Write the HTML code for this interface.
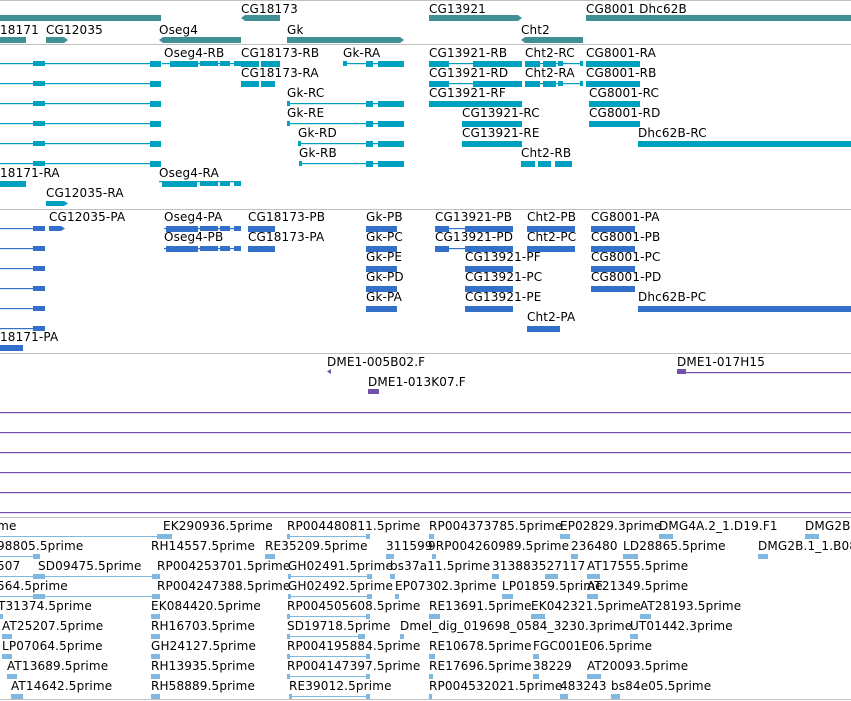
<!DOCTYPE html>
<html><head><meta charset="utf-8"><style>
html,body{margin:0;padding:0;background:#fff;width:851px;height:701px;overflow:hidden}
svg{display:block}
text{font-family:"DejaVu Sans","Liberation Sans",sans-serif;font-size:12px;fill:#000;letter-spacing:0.15px}
</style></head><body>
<svg width="851" height="701" viewBox="0 0 851 701">
<g fill="#c0c0c0">
<rect x="0" y="0" width="851" height="1"/>
<rect x="0" y="44" width="851" height="1"/>
<rect x="0" y="209" width="851" height="1"/>
<rect x="0" y="353" width="851" height="1"/>
<rect x="0" y="517" width="851" height="1"/>
<rect x="0" y="699" width="851" height="1"/>
</g>

<g fill="#3f8f95">
<rect x="0" y="15" width="161" height="6"/>
<polygon points="241,18 245,15 280,15 280,21 245,21"/>
<polygon points="429,15 518,15 522,18 518,21 429,21"/>
<rect x="586" y="15" width="265" height="6"/>
<rect x="0" y="37" width="26" height="6"/>
<polygon points="46,37 64,37 68,40 64,43 46,43"/>
<polygon points="159,40 163,37 241,37 241,43 163,43"/>
<polygon points="287,37 400,37 404,40 400,43 287,43"/>
<polygon points="521,40 525,37 583,37 583,43 525,43"/>
</g>
<text x="241" y="13">CG18173</text>
<text x="429" y="13">CG13921</text>
<text x="586" y="13">CG8001 Dhc62B</text>
<text x="0" y="34">18171</text>
<text x="46" y="34">CG12035</text>
<text x="159" y="34">Oseg4</text>
<text x="287" y="34">Gk</text>
<text x="521" y="34">Cht2</text>

<g fill="#00a0c0">
<rect x="0" y="63" width="161" height="1.2"/><rect x="33" y="61" width="12" height="5"/><rect x="150" y="61" width="11" height="6"/>
<rect x="0" y="83" width="161" height="1.2"/><rect x="33" y="81" width="12" height="5"/><rect x="150" y="81" width="11" height="6"/>
<rect x="0" y="103" width="161" height="1.2"/><rect x="33" y="101" width="12" height="5"/><rect x="150" y="101" width="11" height="6"/>
<rect x="0" y="123" width="161" height="1.2"/><rect x="33" y="121" width="12" height="5"/><rect x="150" y="121" width="11" height="6"/>
<rect x="0" y="143" width="161" height="1.2"/><rect x="33" y="141" width="12" height="5"/><rect x="150" y="141" width="11" height="6"/>
<rect x="0" y="163" width="161" height="1.2"/><rect x="33" y="161" width="12" height="5"/><rect x="150" y="161" width="11" height="6"/>
<rect x="162" y="63" width="79" height="1.2"/><rect x="170" y="61" width="28" height="6"/><rect x="200" y="61" width="18" height="5"/><rect x="220" y="61" width="10" height="5"/><rect x="234" y="61" width="7" height="5"/>
<rect x="241" y="61" width="18" height="6"/><rect x="261" y="61" width="19" height="6"/>
<rect x="241" y="81" width="18" height="6"/><rect x="261" y="81" width="14" height="6"/>
<rect x="343" y="63" width="61" height="1.2"/><rect x="343" y="61" width="4" height="5"/><rect x="366" y="61" width="7" height="6"/><rect x="378" y="61" width="26" height="6"/>
<rect x="287" y="103" width="117" height="1.2"/><rect x="287" y="101" width="3" height="5"/><rect x="366" y="101" width="7" height="6"/><rect x="378" y="101" width="26" height="6"/>
<rect x="287" y="123" width="117" height="1.2"/><rect x="287" y="121" width="3" height="5"/><rect x="366" y="121" width="7" height="6"/><rect x="378" y="121" width="26" height="6"/>
<rect x="298" y="143" width="106" height="1.2"/><rect x="298" y="141" width="3" height="5"/><rect x="366" y="141" width="7" height="6"/><rect x="378" y="141" width="26" height="6"/>
<rect x="299" y="163" width="105" height="1.2"/><rect x="299" y="161" width="3" height="5"/><rect x="366" y="161" width="7" height="6"/><rect x="378" y="161" width="26" height="6"/>
<rect x="429" y="63" width="93" height="1.2"/><rect x="429" y="61" width="20" height="6"/><rect x="473" y="61" width="49" height="6"/>
<rect x="429" y="83" width="93" height="1.2"/><rect x="429" y="81" width="20" height="6"/><rect x="473" y="81" width="49" height="6"/>
<rect x="429" y="101" width="93" height="6"/>
<rect x="462" y="121" width="60" height="6"/>
<rect x="462" y="141" width="60" height="6"/>
<rect x="525" y="63" width="58" height="1.2"/><rect x="525" y="61" width="15" height="6"/><rect x="543" y="61" width="13" height="6"/><rect x="558" y="61" width="5" height="5"/><rect x="580" y="61" width="3" height="5"/>
<rect x="525" y="83" width="58" height="1.2"/><rect x="525" y="81" width="15" height="6"/><rect x="543" y="81" width="13" height="6"/><rect x="558" y="81" width="5" height="5"/><rect x="580" y="81" width="3" height="5"/>
<rect x="521" y="161" width="14" height="6"/><rect x="538" y="161" width="13" height="6"/><rect x="555" y="161" width="17" height="6"/>
<rect x="586" y="61" width="54" height="6"/><rect x="586" y="81" width="54" height="6"/><rect x="589" y="101" width="51" height="6"/><rect x="589" y="121" width="51" height="6"/>
<rect x="638" y="141" width="213" height="6"/>
<rect x="0" y="181" width="26" height="6"/>
<rect x="159" y="181" width="82" height="1.2"/><rect x="162" y="181" width="35" height="6"/><rect x="200" y="181" width="18" height="5"/><rect x="220" y="181" width="10" height="5"/><rect x="234" y="181" width="7" height="5"/>
<polygon points="46,201 64,201 68,203.5 64,206 46,206"/>
</g>
<text x="164" y="57">Oseg4-RB</text><text x="241" y="57">CG18173-RB</text><text x="343" y="57">Gk-RA</text><text x="429" y="57">CG13921-RB</text><text x="525" y="57">Cht2-RC</text><text x="586" y="57">CG8001-RA</text>
<text x="241" y="77">CG18173-RA</text><text x="429" y="77">CG13921-RD</text><text x="525" y="77">Cht2-RA</text><text x="586" y="77">CG8001-RB</text>
<text x="287" y="97">Gk-RC</text><text x="429" y="97">CG13921-RF</text><text x="589" y="97">CG8001-RC</text>
<text x="287" y="117">Gk-RE</text><text x="462" y="117">CG13921-RC</text><text x="589" y="117">CG8001-RD</text>
<text x="298" y="137">Gk-RD</text><text x="462" y="137">CG13921-RE</text><text x="638" y="137">Dhc62B-RC</text>
<text x="299" y="157">Gk-RB</text><text x="521" y="157">Cht2-RB</text>
<text x="0" y="177">18171-RA</text><text x="159" y="177">Oseg4-RA</text>
<text x="46" y="197">CG12035-RA</text>

<g fill="#3370cc">
<rect x="0" y="228" width="45" height="1.2"/><rect x="33" y="226" width="12" height="5"/>
<rect x="0" y="248" width="45" height="1.2"/><rect x="33" y="246" width="12" height="5"/>
<rect x="0" y="268" width="45" height="1.2"/><rect x="33" y="266" width="12" height="5"/>
<rect x="0" y="288" width="45" height="1.2"/><rect x="33" y="286" width="12" height="5"/>
<rect x="0" y="308" width="45" height="1.2"/><rect x="33" y="306" width="12" height="5"/>
<rect x="0" y="328" width="45" height="1.2"/><rect x="33" y="326" width="12" height="5"/>
<polygon points="49,226 61,226 65,228.5 61,231 49,231"/>
<rect x="164" y="228" width="77" height="1.2"/><rect x="166" y="226" width="32" height="6"/><rect x="200" y="226" width="18" height="5"/><rect x="220" y="226" width="10" height="5"/><rect x="234" y="226" width="7" height="5"/>
<rect x="164" y="248" width="77" height="1.2"/><rect x="166" y="246" width="32" height="6"/><rect x="200" y="246" width="18" height="5"/><rect x="220" y="246" width="10" height="5"/><rect x="234" y="246" width="7" height="5"/>
<rect x="248" y="226" width="27" height="6"/><rect x="248" y="246" width="27" height="6"/>
<rect x="366" y="226" width="31" height="6"/><rect x="366" y="246" width="31" height="6"/><rect x="366" y="266" width="31" height="6"/><rect x="366" y="286" width="31" height="6"/><rect x="366" y="306" width="31" height="6"/>
<rect x="435" y="228" width="78" height="1.2"/><rect x="435" y="226" width="14" height="6"/><rect x="465" y="226" width="48" height="6"/>
<rect x="435" y="248" width="78" height="1.2"/><rect x="435" y="246" width="14" height="6"/><rect x="465" y="246" width="48" height="6"/>
<rect x="465" y="266" width="48" height="6"/><rect x="465" y="286" width="48" height="6"/><rect x="465" y="306" width="48" height="6"/>
<rect x="527" y="226" width="48" height="6"/><rect x="527" y="246" width="48" height="6"/><rect x="527" y="326" width="33" height="6"/>
<rect x="591" y="226" width="44" height="6"/><rect x="591" y="246" width="44" height="6"/><rect x="591" y="266" width="44" height="6"/><rect x="591" y="286" width="44" height="6"/>
<rect x="638" y="306" width="213" height="6"/>
<rect x="0" y="345" width="23" height="6"/>
</g>
<text x="49" y="221">CG12035-PA</text><text x="164" y="221">Oseg4-PA</text><text x="248" y="221">CG18173-PB</text><text x="366" y="221">Gk-PB</text><text x="435" y="221">CG13921-PB</text><text x="527" y="221">Cht2-PB</text><text x="591" y="221">CG8001-PA</text>
<text x="164" y="241">Oseg4-PB</text><text x="248" y="241">CG18173-PA</text><text x="366" y="241">Gk-PC</text><text x="435" y="241">CG13921-PD</text><text x="527" y="241">Cht2-PC</text><text x="591" y="241">CG8001-PB</text>
<text x="366" y="261">Gk-PE</text><text x="465" y="261">CG13921-PF</text><text x="591" y="261">CG8001-PC</text>
<text x="366" y="281">Gk-PD</text><text x="465" y="281">CG13921-PC</text><text x="591" y="281">CG8001-PD</text>
<text x="366" y="301">Gk-PA</text><text x="465" y="301">CG13921-PE</text><text x="638" y="301">Dhc62B-PC</text>
<text x="527" y="321">Cht2-PA</text>
<text x="0" y="341">18171-PA</text>

<g fill="#7050a8">
<polygon points="327,371.5 331,369 331,374"/>
<rect x="677" y="369" width="9" height="5"/><rect x="686" y="372" width="165" height="1.2"/>
<rect x="368" y="389" width="11" height="5"/>
<rect x="0" y="412" width="851" height="1.2"/>
<rect x="0" y="432" width="851" height="1.2"/>
<rect x="0" y="452" width="851" height="1.2"/>
<rect x="0" y="472" width="851" height="1.2"/>
<rect x="0" y="492" width="851" height="1.2"/>
<rect x="0" y="512" width="851" height="1.2"/>
</g>
<text x="327" y="366">DME1-005B02.F</text><text x="677" y="366">DME1-017H15</text>
<text x="368" y="386">DME1-013K07.F</text>

<g fill="#80b8e0">
<rect x="0" y="536" width="160" height="1"/><rect x="157" y="534" width="15" height="5"/>
<rect x="287" y="536" width="83" height="1"/><rect x="287" y="534" width="3" height="5"/><rect x="366" y="534" width="4" height="5"/>
<rect x="429" y="534" width="5" height="5"/><rect x="560" y="534" width="10" height="5"/><rect x="659" y="534" width="14" height="5"/><rect x="805" y="534" width="14" height="5"/>
<rect x="0" y="556" width="40" height="1"/><rect x="33" y="554" width="7" height="5"/>
<rect x="265" y="554" width="10" height="5"/><rect x="386" y="554" width="8" height="5"/><rect x="432" y="554" width="4" height="5"/><rect x="571" y="554" width="7" height="5"/><rect x="623" y="554" width="15" height="5"/><rect x="758" y="554" width="10" height="5"/>
<rect x="0" y="576" width="160" height="1"/><rect x="33" y="574" width="12" height="5"/><rect x="152" y="574" width="8" height="5"/>
<rect x="288" y="576" width="84" height="1"/><rect x="288" y="574" width="3" height="5"/><rect x="367" y="574" width="5" height="5"/><rect x="390" y="574" width="5" height="5"/>
<rect x="492" y="574" width="7" height="5"/><rect x="545" y="574" width="13" height="5"/><rect x="587" y="574" width="13" height="5"/>
<rect x="0" y="596" width="160" height="1"/><rect x="33" y="594" width="12" height="5"/><rect x="152" y="594" width="8" height="5"/>
<rect x="288" y="596" width="84" height="1"/><rect x="288" y="594" width="3" height="5"/><rect x="367" y="594" width="5" height="5"/><rect x="395" y="594" width="4" height="5"/>
<rect x="502" y="594" width="11" height="5"/><rect x="587" y="594" width="11" height="5"/>
<rect x="0" y="614" width="3" height="5"/><rect x="151" y="614" width="9" height="5"/><rect x="287" y="616" width="83" height="1"/><rect x="287" y="614" width="3" height="5"/><rect x="366" y="614" width="4" height="5"/>
<rect x="429" y="614" width="11" height="5"/><rect x="531" y="614" width="14" height="5"/><rect x="640" y="614" width="11" height="5"/>
<rect x="2" y="634" width="10" height="5"/><rect x="151" y="634" width="9" height="5"/><rect x="287" y="636" width="78" height="1"/><rect x="287" y="634" width="3" height="5"/><rect x="358" y="634" width="7" height="5"/><rect x="400" y="634" width="4" height="5"/><rect x="630" y="634" width="8" height="5"/>
<rect x="2" y="654" width="10" height="5"/><rect x="151" y="654" width="9" height="5"/><rect x="287" y="656" width="83" height="1"/><rect x="287" y="654" width="3" height="5"/><rect x="366" y="654" width="4" height="5"/><rect x="429" y="654" width="6" height="5"/><rect x="533" y="654" width="6" height="5"/>
<rect x="7" y="674" width="10" height="5"/><rect x="151" y="674" width="9" height="5"/><rect x="287" y="676" width="83" height="1"/><rect x="287" y="674" width="3" height="5"/><rect x="366" y="674" width="4" height="5"/><rect x="429" y="674" width="4" height="5"/><rect x="533" y="674" width="6" height="5"/><rect x="587" y="674" width="14" height="5"/>
<rect x="11" y="694" width="12" height="5"/><rect x="151" y="694" width="9" height="5"/><rect x="289" y="696" width="81" height="1"/><rect x="289" y="694" width="3" height="5"/><rect x="366" y="694" width="4" height="5"/><rect x="429" y="694" width="3" height="5"/><rect x="560" y="694" width="8" height="5"/><rect x="611" y="694" width="9" height="5"/>
</g>
<text x="-27" y="530">5prime</text><text x="163" y="530">EK290936.5prime</text><text x="287" y="530">RP004480811.5prime</text><text x="429" y="530">RP004373785.5prime</text><text x="560" y="530">EP02829.3prime</text><text x="659" y="530">DMG4A.2_1.D19.F1</text><text x="805" y="530">DMG2B.</text>
<text x="-3" y="550">98805.5prime</text><text x="151" y="550">RH14557.5prime</text><text x="265" y="550">RE35209.5prime</text><text x="386" y="550">311599</text><text x="428" y="550">9RP004260989.5prime</text><text x="571" y="550">236480</text><text x="623" y="550">LD28865.5prime</text><text x="758" y="550">DMG2B.1_1.B08</text>
<text x="-3" y="570">507</text><text x="38" y="570">SD09475.5prime</text><text x="157" y="570">RP004253701.5prime</text><text x="288" y="570">GH02491.5prime</text><text x="390" y="570">bs37a11.5prime</text><text x="492" y="570">313883527117</text><text x="587" y="570">AT17555.5prime</text>
<text x="-3" y="590">564.5prime</text><text x="157" y="590">RP004247388.5prime</text><text x="288" y="590">GH02492.5prime</text><text x="395" y="590">EP07302.3prime</text><text x="502" y="590">LP01859.5prime</text><text x="587" y="590">AT21349.5prime</text>
<text x="-2" y="610">T31374.5prime</text><text x="151" y="610">EK084420.5prime</text><text x="287" y="610">RP004505608.5prime</text><text x="429" y="610">RE13691.5prime</text><text x="531" y="610">EK042321.5prime</text><text x="640" y="610">AT28193.5prime</text>
<text x="2" y="630">AT25207.5prime</text><text x="151" y="630">RH16703.5prime</text><text x="287" y="630">SD19718.5prime</text><text x="400" y="630">Dmel_dig_019698_0584_3230.3prime</text><text x="630" y="630">UT01442.3prime</text>
<text x="2" y="650">LP07064.5prime</text><text x="151" y="650">GH24127.5prime</text><text x="287" y="650">RP004195884.5prime</text><text x="429" y="650">RE10678.5prime</text><text x="533" y="650">FGC001E06.5prime</text>
<text x="7" y="670">AT13689.5prime</text><text x="151" y="670">RH13935.5prime</text><text x="287" y="670">RP004147397.5prime</text><text x="429" y="670">RE17696.5prime</text><text x="533" y="670">38229</text><text x="587" y="670">AT20093.5prime</text>
<text x="11" y="690">AT14642.5prime</text><text x="151" y="690">RH58889.5prime</text><text x="289" y="690">RE39012.5prime</text><text x="429" y="690">RP004532021.5prime</text><text x="560" y="690">483243</text><text x="611" y="690">bs84e05.5prime</text>
</svg>
</body></html>
